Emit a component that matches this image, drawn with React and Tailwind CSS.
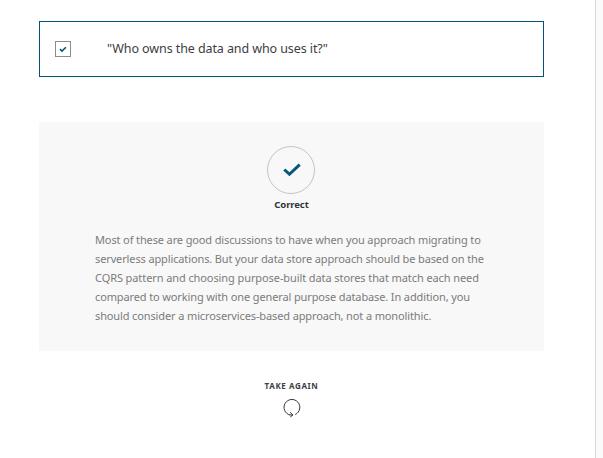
const feedback = [
  { text: 'Most of these are good discussions to have when you approach migrating to', spacing: 'tracking-[-0.125px]' },
  { text: 'serverless applications. But your data store approach should be based on the', spacing: 'tracking-[-0.125px]' },
  { text: 'CQRS pattern and choosing purpose-built data stores that match each need', spacing: 'tracking-[-0.09px]' },
  { text: 'compared to working with one general purpose database. In addition, you', spacing: 'tracking-[-0.125px]' },
  { text: 'should consider a microservices-based approach, not a monolithic.', spacing: 'tracking-[-0.125px]' },
];

function Answer() {
  return (
    <div className="flex h-14 items-center border border-[#00547c] pl-[15px]">
      <span className="flex size-4 items-center justify-center border border-[#8c8c8c]">
        <svg width="14" height="14" viewBox="0 0 14 14" fill="none" stroke="#07577a" strokeWidth="1.6">
          <path d="M3.9 7.2L6 9.1L9.9 5.3" />
        </svg>
      </span>
      <span className="ml-9 text-[12.5px] leading-5 tracking-[-0.09px] whitespace-nowrap text-[#3c4043]">
        "Who owns the data and who uses it?"
      </span>
    </div>
  );
}

function Feedback() {
  return (
    <div className="mt-[45px] flex h-[229px] flex-col bg-[#f8f8f8] pt-6">
      <div className="mr-px flex size-12 items-center justify-center self-center rounded-full border border-[#c4c4c4]">
        <svg width="46" height="46" viewBox="0 0 46 46" fill="none" stroke="#07577a" strokeWidth="3">
          <path d="M16.3 22.5L21.4 27.3L31.7 17.6" />
        </svg>
      </div>
      <div className="mt-1 self-center text-[9.5px] leading-3.5 font-bold tracking-[-0.1px] text-[#313537]">Correct</div>
      <div className="mt-[18px] pl-14 text-[11px] leading-[19px] whitespace-nowrap text-[#7b7b7b]">
        {feedback.map((line) => (
          <div key={line.text}><span className={line.spacing}>{line.text}</span></div>
        ))}
      </div>
    </div>
  );
}

export default function App() {
  return (
    <div className="flex h-[458px] w-[603px] overflow-hidden bg-white font-['Noto_Sans',sans-serif]">
      <main className="w-[595px] pt-[21px] pr-[51px] pl-[39px]">
        <Answer />
        <Feedback />
        <div className="mt-[29px] flex flex-col items-center">
          <span className="text-[8px] leading-3 font-bold tracking-[0.6px] text-[#3c4043]">TAKE AGAIN</span>
          <svg className="mt-1.5" width="20" height="20" viewBox="0 0 20 20" fill="none" stroke="#313537" strokeWidth="1">
            <path d="M13.3 16.5A7.9 7.9 0 1 0 7.9 17M8.2 14.2L10.9 17.1L8.3 18.9M7.5 16.8L10.8 17.1" />
          </svg>
        </div>
      </main>
      <aside className="w-2 border-l border-[#dadada] bg-[#fafafa]" />
    </div>
  );
}
